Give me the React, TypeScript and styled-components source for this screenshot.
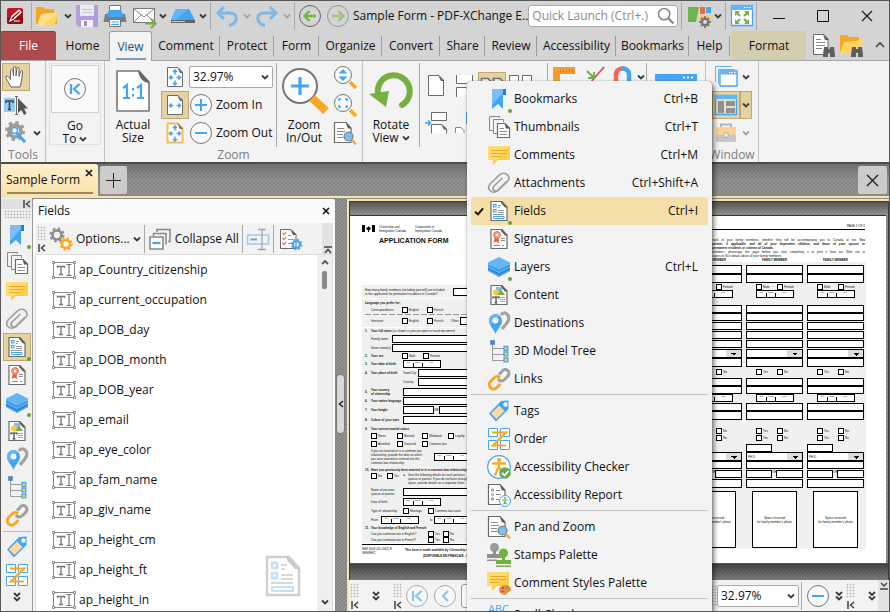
import React from "react";
import styled, { createGlobalStyle, css } from "styled-components";

const Global = createGlobalStyle`
  * { box-sizing: border-box; }
  html, body { margin: 0; height: 100%; }
  #root { height: 100%; }
  body { font: 12px/16px "Open Sans", "Noto Sans", sans-serif; color: #111; overflow: hidden; }
  button, input, select { font: inherit; color: inherit; margin: 0; padding: 0; border: 0; background: none; border-radius: 0; }
  svg { display: block; flex: none; overflow: visible; }
`;

/* ------------------------------------------------------------------ icons */

type IconProps = { size?: number; children?: React.ReactNode };
const Svg = ({ size = 24, children }: IconProps) => (
  <svg width={size} height={size} viewBox="0 0 24 24" fill="none" aria-hidden="true">{children}</svg>
);

const BLUE = "#42a5f5";
const LIGHT = "#7cbcf7";
const GREY = "#6b6b6b";
const GREEN = "#76b043";
const ORANGE = "#f9a825";

const Chevron = ({ faded = false }: { faded?: boolean }) => (
  <svg width="8" height="6" viewBox="0 0 8 6" fill="none" aria-hidden="true">
    <path d="M1 1.500 4 4.500 7 1.500" stroke={faded ? "#a3a3a3" : "#3c3c3c"} strokeWidth="1.800" />
  </svg>
);
const DoubleChevron = () => (
  <svg width="8" height="10" viewBox="0 0 8 10" fill="none" aria-hidden="true">
    <path d="M1 1 4 4 7 1M1 5.500 4 8.500 7 5.500" stroke="#3c3c3c" strokeWidth="1.800" />
  </svg>
);
const DockMark = () => (
  <svg width="8" height="8" viewBox="0 0 8 8" fill="none" aria-hidden="true">
    <path d="M1 0V8M7 1 3.500 4 7 7" stroke="#444" strokeWidth="1.500" />
  </svg>
);
const Cross = ({ size = 8, weight = 1.7 }: { size?: number; weight?: number }) => (
  <svg width={size} height={size} viewBox={`0 0 ${size} ${size}`} aria-hidden="true">
    <path d={`M1 1 ${size - 1} ${size - 1}M${size - 1} 1 1 ${size - 1}`} stroke="#1b1b1b" strokeWidth={weight} />
  </svg>
);

const Sheet = () => (
  <>
    <path d="M4 2.500H15L20 8V21.500H4Z" fill="#fff" stroke={GREY} strokeWidth="1.200" />
    <path d="M14 2 20.500 8.500H18L14 4Z" fill="#5a5a5a" />
  </>
);
const BookmarkIcon = () => (
  <Svg>
    <path d="M5 2H19V8H16V22L11 17 5 22Z" fill={BLUE} />
    <path d="M5 2H16V6L5 18Z" fill={LIGHT} />
    <path d="M16 2H19V8H16Z" fill="#1e83d8" />
  </Svg>
);
const ThumbsIcon = () => (
  <Svg>
    <path d="M12.500 3V1.500H2.500V15.500H6" stroke="#8a8a8a" />
    <path d="M16.500 7V4.500H6.500V18.500H10" stroke="#8a8a8a" fill="#f5f5f5" />
    <path d="M10.500 8.500H18L22.500 13V22.500H10.500Z" fill="#fff" stroke={GREY} strokeWidth="1.200" />
    <path d="M17.500 8 23 13.500H19Z" fill="#5a5a5a" />
    <path d="M12.500 13.500H17M12.500 16.500H20M12.500 19.500H20" stroke="#8a8a8a" />
  </Svg>
);
const Bubble = () => (
  <>
    <path d="M1 3H23V17H11L6 22V17H1Z" fill="#ffcf4a" />
    <path d="M1 3H23L9 17H1Z" fill="#ffdc73" />
    <path d="M4 7.500H20M4 10.500H20M4 13.500H14" stroke="#f5a623" />
  </>
);
const CommentIcon = () => <Svg><Bubble /></Svg>;
const ClipIcon = () => (
  <Svg>
    <path d="M20 10 10.500 19.500C5.500 24-1.500 18 3.500 12.500L12.500 3.800C17-.5 25.500 5 20.500 10.500L11 19.500C8 21.500 4.500 18.500 7 15L15.500 7" stroke="#a0a0a0" strokeWidth="1.700" />
  </Svg>
);
const FieldsIcon = ({ size = 24 }: { size?: number }) => (
  <Svg size={size}>
    <Sheet />
    <path d="M6.500 5.500H9V8H6.500ZM6.500 10.500H9V13H6.500Z" stroke={BLUE} strokeWidth="1.200" />
    <path d="M11 6.500H14M11 8.500H13M11 11.500H17M11 13.500H17M6 15.500H17" stroke="#8a8a8a" strokeWidth=".9" />
    <path d="M6.500 17.500H17V19.500H6.500Z" stroke={BLUE} />
  </Svg>
);
const SignIcon = () => (
  <Svg>
    <Sheet />
    <path d="M8 10 6.500 16 9.500 14.500 12 16 11.500 10Z" fill="#ef5b3a" />
    <circle cx="10" cy="8" r="3.400" fill="#f7a08a" stroke="#ef6a4a" />
    <circle cx="10" cy="8" r="1.200" fill="#fff" />
    <path d="M14 11.500H18M14 13.500H18M7 18.500H13M15 18.500H17" stroke="#8a8a8a" />
  </Svg>
);
const LayersIcon = () => (
  <Svg>
    <path d="M1 12 12 17 23 12V16L12 22 1 16Z" fill="#2b87d8" />
    <path d="M1 9 12 14 23 9V12L12 18 1 12Z" fill="#3b9cf0" />
    <path d="M1 15.500 12 21 23 15.500M1 12 12 17.500 23 12" stroke="#8cc5f5" strokeWidth=".7" />
    <path d="M12 2 23 7.500V9L12 14.500 1 9V7.500Z" fill="#64b5f6" />
  </Svg>
);
const ContentIcon = () => (
  <Svg>
    <Sheet />
    <path d="M9 4H15V9H9Z" fill={LIGHT} />
    <circle cx="9" cy="9.500" r="3" fill="#fdc832" />
    <path d="M10.500 12 14 6.500 18 12Z" fill={GREEN} />
    <path d="M6 15.500V14H12V15.500M9 14V19.500M7.500 20H10.500" stroke="#333" strokeWidth="1.200" />
    <path d="M13 14.500H18M13 16.500H18M13 18.500H18" stroke="#999" strokeWidth=".9" />
  </Svg>
);
const PinIcon = () => (
  <Svg>
    <path d="M14 4C17-.5 23 3 21.500 9 20.500 12.500 17 15 15 18" stroke="#a3a3a3" strokeWidth="3.200" />
    <path d="M8.500 23C7 18 2 15 2 9.500a6.500 6.500 0 0 1 13 0C15 15 10 18 8.500 23Z" fill={BLUE} />
    <path d="M2 9.500a6.500 6.500 0 0 1 11-4.500L4 14.500Q2 12 2 9.500Z" fill="#64b5f6" />
    <circle cx="8.500" cy="9.500" r="3" fill="#f5f5f5" />
  </Svg>
);
const TreeIcon = () => (
  <Svg>
    <path d="M5.500 4V21.500M5.500 9.500H17M5.500 15.500H17M5.500 21.500H17" stroke="#9b9b9b" />
    <path d="M3.500 1.500H7.500V5.500H3.500Z" fill="#f4511e" stroke={BLUE} />
    <path d="M17 7.500H20.800V11.300H17ZM17 13H20.800V16.800H17ZM17 19H20.800V22.800H17Z" fill="#ffd54f" stroke={BLUE} strokeWidth="1.300" />
  </Svg>
);
const LinkIcon = () => (
  <Svg>
    <path d="M12 7.500 15 4.500C18-.5 25 5 20.500 9.500L17.500 12.500C15 15 12.500 14 11 12" stroke="#a0a0a0" strokeWidth="3" />
    <path d="M13 10.500C10 8.500 8 10 6.500 11.500L3.500 14.500C-.5 20 6.500 25 10.500 20L13.500 17" stroke={ORANGE} strokeWidth="3" />
  </Svg>
);
const TagIcon = () => (
  <Svg>
    <path d="M14 2 21.500 1.500V10L9 22.500 2 14.500Z" fill={BLUE} />
    <path d="M12 6.500 17.500 12 9.500 20 4 14.500Z" fill="#ffd9a0" />
    <circle cx="18.500" cy="5.500" r="2.200" fill="#fff" />
  </Svg>
);
const OrderIcon = () => (
  <Svg>
    <path d="M1.500 1.500H10.500V9.500H1.500ZM13.500 1.500H22.500V9.500H13.500ZM1.500 13.500H10.500V22.500H1.500ZM13.500 13.500H22.500V22.500H13.500Z" fill="#fff" stroke={BLUE} />
    <path d="M5 5.500H19L6 18.500H19" stroke={ORANGE} strokeWidth="2.200" />
  </Svg>
);
const CheckerIcon = () => (
  <Svg>
    <circle cx="12" cy="12" r="11.300" fill="#fff" stroke={BLUE} strokeWidth="1.200" />
    <circle cx="12" cy="5" r="2.200" fill={ORANGE} />
    <path d="M5 8.500H19M12 8V14M11 13 8 20.500M13 13 14.500 17" stroke={ORANGE} strokeWidth="2.400" />
    <circle cx="18" cy="18" r="5.800" fill="#6aa84f" />
    <path d="M15 18 17.500 20.500 21.500 16" stroke="#fff" strokeWidth="1.800" />
  </Svg>
);
const ReportIcon = () => (
  <Svg>
    <path d="M1.500 1.500H13L18 7V21.500H1.500Z" fill="#fff" stroke={GREY} strokeWidth="1.200" />
    <path d="M12.500 1 18.500 7.500H15Z" fill="#5a5a5a" />
    <path d="M4.500 6H6.500V8H4.500Z" stroke={BLUE} /><path d="M4.500 10.500H6.500V12.500H4.500Z" stroke={ORANGE} /><path d="M4.500 15H6.500V17H4.500Z" stroke={GREEN} />
    <path d="M9 7.500H13M9 11.500H14M9 16.500H12" stroke="#8a8a8a" />
    <circle cx="18" cy="18" r="5.500" fill="#fff" stroke={BLUE} />
    <circle cx="18" cy="15" r="1" fill={GREEN} />
    <path d="M15 17H21M18 17V19L16.500 21.500M18 19 19.500 21.500" stroke={GREEN} strokeWidth="1.200" />
  </Svg>
);
const PanIcon = () => (
  <Svg>
    <path d="M1.500 1.500H13L18 7V21.500H1.500Z" fill="#fff" stroke={GREY} strokeWidth="1.200" />
    <path d="M12.500 1 18.500 7.500H15Z" fill="#5a5a5a" />
    <path d="M4 7.500H11M4 10.500H12M4 13.500H10M4 16.500H10" stroke="#8a8a8a" />
    <circle cx="15.500" cy="15.500" r="4.500" fill={LIGHT} stroke="#7d7d7d" strokeWidth="1.200" />
    <path d="M19 19 23 23.500" stroke={ORANGE} strokeWidth="2.200" />
  </Svg>
);
const StampIcon = () => (
  <Svg>
    <circle cx="7.500" cy="4.500" r="4.500" fill="#9a9a9a" /><path d="M6 7H9V11H15V15H0V11H6Z" fill="#8f8f8f" /><path d="M0 16.500H10V18H0Z" fill="#8f8f8f" />
    <circle cx="16.500" cy="10" r="4.600" fill={GREEN} /><path d="M15 13H18V17H24V21H9V17H15Z" fill={GREEN} /><path d="M9 22.500H24V24H9Z" fill={GREEN} />
  </Svg>
);
const StylesIcon = () => (
  <Svg>
    <g transform="translate(-1 -2)"><Bubble /></g>
    <path d="M12 19C12 13 23 12 24 18 24.500 21 21 20 20.500 22 20 25 12 24 12 19Z" fill="#ee8f2f" />
    <circle cx="16" cy="17" r="1.100" fill="#d63a2f" /><circle cx="20" cy="17" r="1.100" fill={BLUE} /><circle cx="15.500" cy="20.500" r="1.100" fill="#7b52c0" />
  </Svg>
);
const SpellIcon = () => (
  <Svg>
    <text x="1" y="10" fontSize="11" fill={BLUE}>ABC</text>
    <path d="M4 17 10 22 20 13" stroke={GREEN} strokeWidth="3" />
  </Svg>
);
const FieldGlyph = () => (
  <svg width="24" height="18" viewBox="0 0 24 18" fill="none" aria-hidden="true">
    <path d="M1.500 1.500H22.500V16.500H1.500Z" stroke="#888" />
    <path d="M.5 .5H2.500V2.500H.5ZM21.500 .5H23.500V2.500H21.500ZM.5 15.500H2.500V17.500H.5ZM21.500 15.500H23.500V17.500H21.500Z" fill="#fff" stroke="#888" />
    <path d="M5.500 7V5.500H12.500V7M9 5V13M7 13.500H11" stroke="#777" strokeWidth="1.300" />
    <path d="M14.500 3.500H19.500M17 3.500V14.500M14.500 14.500H19.500" stroke="#777" strokeWidth="1.200" />
  </svg>
);

const FolderIcon = () => (
  <Svg>
    <path d="M1 3H8L10 5H19V9H22V20H1Z" fill="#f5a623" />
    <path d="M6 10 24 8.500 19 22 2 22Z" fill="#ffd560" /><path d="M6 10 24 8.500 7 22H2Z" fill="#ffe08a" />
  </Svg>
);
const LogoIcon = () => (
  <svg width="16" height="16" viewBox="0 0 16 16" fill="none" aria-hidden="true">
    <rect width="16" height="16" rx="2" fill="#c4161c" /><path d="M0 10 16 4V14a2 2 0 0 1-2 2H2a2 2 0 0 1-2-2Z" fill="#8e0f14" />
    <path d="M3 13 5 8 12 2 14 4 7 11ZM7 13H13" stroke="#fff" strokeWidth="1.200" /><path d="M5 9 12 3M7 10 14 5" stroke="#fff" />
  </svg>
);
const SaveIcon = () => (
  <Svg>
    <path d="M1 1H23V23H4L1 20Z" fill="#b39ddb" /><path d="M5 1H19V12H5Z" fill="#ece8f4" /><path d="M7 5.500H17M7 8.500H17" stroke="#c9c9c9" />
    <path d="M6 16H18V23H6Z" fill="#f4f4f8" /><path d="M9 17H12V22H9Z" fill="#a18bd0" />
  </Svg>
);
const PrinterIcon = () => (
  <Svg>
    <path d="M6.500 1.500H17.500V10H6.500Z" fill="#fff" stroke="#777" /><path d="M2 10H22L23.500 18H.5Z" fill="#7c7c7c" />
    <path d="M4 10 6 6H18L20 10V13H4Z" fill={BLUE} /><path d="M6.500 15.500H17.500V22.500H6.500Z" fill="#fff" stroke="#777" /><path d="M8 18H16M8 20.500H16" stroke={BLUE} />
  </Svg>
);
const MailIcon = () => (
  <Svg>
    <path d="M1.500 4.500H22.500V18.500H1.500Z" fill="#fff" stroke="#777" /><path d="M2 5 12 13 22 5M2 18 9 11M22 18 15 11" stroke="#888" />
    <path d="M13 19.500H23M19 15 23.500 19.500 19 24" stroke={GREEN} strokeWidth="2.200" />
  </Svg>
);
const ScanIcon = () => (
  <Svg>
    <path d="M5 5H18L24 16H0Z" fill={BLUE} /><path d="M5 5H17L5 16H0Z" fill="#64b5f6" /><path d="M0 16H24V19H0Z" fill="#666" /><path d="M1 17.500H14" stroke="#ccc" />
  </Svg>
);
const UndoIcon = ({ flip = false }: { flip?: boolean }) => (
  <Svg><g transform={flip ? "matrix(-1 0 0 1 24 0)" : undefined}><path d="M9 3 3 9 9 15M3 9H15C20 9 22 12 21 16 20 19 17 21 14 21" stroke="#7db8e8" strokeWidth="3" /></g></Svg>
);
const ArrowCircle = ({ faded = false }: { faded?: boolean }) => (
  <Svg><g opacity={faded ? 0.55 : 1}><circle cx="12" cy="12" r="10.500" stroke="#666" /><g transform={faded ? "matrix(-1 0 0 1 24 0)" : undefined}><path d="M11.500 7 6.500 12 11.500 17M6.500 12H18" stroke={GREEN} strokeWidth="2.300" /></g></g></Svg>
);
const SkinIcon = () => (
  <Svg>
    <path d="M1 3H12L9 18H1Z" fill="#6fb34c" /><path d="M13 3H18V10H13Z" fill="#f4693c" /><path d="M19 3H24V9H19Z" fill={BLUE} /><path d="M12 11H24V16H12Z" fill="#ffcc66" />
    <path d="M18 12V24M12 18H24M14 14 22 22M22 14 14 22" stroke="#777" strokeWidth="1.800" /><circle cx="18" cy="18" r="3.200" stroke="#777" strokeWidth="2.400" fill="#ddd" />
  </Svg>
);
const FullIcon = () => (
  <Svg>
    <path d="M1.500 1.500H22.500V21.500H1.500Z" fill="#fff" stroke={BLUE} strokeWidth="1.300" /><path d="M1 1H23V6H1Z" fill="#64b5f6" /><path d="M14 3.500H21" stroke="#fff" strokeDasharray="1.500 1" />
    <path d="M5 7H10L5 12ZM19 7V12L14 7ZM5 20V15L10 20ZM19 20H14L19 15Z" fill={GREEN} /><path d="M7 9 10 12M17 9 14 12M7 18 10 15M17 18 14 15" stroke={GREEN} strokeWidth="2.200" />
  </Svg>
);
const Binoculars = () => <path d="M13 14H17V16H19V14H23L24 22V24H19V20H17V24H12V22Z" fill="#5f5f5f" />;
const FindDocIcon = () => (
  <Svg><path d="M2.500 1.500H13L17 6V21.500H2.500Z" fill="#fff" stroke={GREY} /><path d="M12 1 18 7H14Z" fill="#5a5a5a" /><path d="M5 6.500H10M5 9.500H14M5 12.500H14M5 15.500H11" stroke="#888" /><Binoculars /></Svg>
);
const FindFolderIcon = () => (
  <Svg><path d="M1 2H8L10 4H20V8H22V19H1Z" fill="#f5a623" /><path d="M5 9 24 7 20 20H1Z" fill="#ffd560" /><Binoculars /></Svg>
);
const HandIcon = () => (
  <Svg>
    <path d="M7 22 3 15 1.500 12C2 10.500 3.500 11 5 12.500L6.500 14.500V5.500C6.500 4 8.500 4 8.700 5.500L9.500 11V3C9.500 1.300 12 1.300 12 3V11L12.800 3.500C13 2 15 2 15 3.500V11.500L16.500 6.500C17 5 18.800 5.500 18.500 7L17.500 16 16 22Z" fill="#fff" stroke="#666" />
  </Svg>
);
const SelectIcon = () => (
  <Svg>
    <path d="M0 5H11V19H0Z" fill="#90caf9" /><path d="M2 10V8H9V10M5.500 8V16M4 16.500H7" stroke="#444" strokeWidth="1.600" /><path d="M11 3.500H14M12.500 3V21M11 21.500H14" stroke="#666" />
    <path d="M14 5 24 15.500H20L22.500 20.500 20 22 17.500 17 14 20Z" fill="#555" />
  </Svg>
);
const Cog = ({ cx, cy, r, color }: { cx: number; cy: number; r: number; color: string }) => (
  <>
    <circle cx={cx} cy={cy} r={r} stroke={color} strokeWidth={r * 0.6} />
    <circle cx={cx} cy={cy} r={r * 1.45} stroke={color} strokeWidth={r * 0.45} strokeDasharray={`${r * 0.57} ${r * 0.57}`} />
  </>
);
const ToolsIcon = () => (
  <Svg><Cog cx={11} cy={10} r={6} color="#9a9a9a" /><path d="M11 10 21 21" stroke={BLUE} strokeWidth="3" /><circle cx="10.500" cy="9.500" r="3" fill="#fff" stroke={BLUE} strokeWidth="1.500" /></Svg>
);
const CogsIcon = () => <Svg><Cog cx={8} cy={8} r={4.5} color="#8d8d8d" /><Cog cx={17} cy={17} r={4} color={ORANGE} /></Svg>;
const FirstCircle = ({ only = false, faded = false }: { only?: boolean; faded?: boolean }) => (
  <Svg><circle cx="12" cy="12" r="10.500" fill="#f8f8f8" stroke={faded ? "#aaa" : "#777"} /><path d={only ? "M15 7 10 12 15 17" : "M8 7V17M16.500 7 11 12 16.500 17"} stroke={faded ? "#8cc5f5" : BLUE} strokeWidth="2.200" /></Svg>
);
const ZoomCircle = ({ plus = false }: { plus?: boolean }) => (
  <Svg><circle cx="12" cy="12" r="10.500" fill="#fafafa" stroke="#777" /><path d={plus ? "M6 12H18M12 6V18" : "M6 12H18"} stroke={BLUE} strokeWidth="2" /></Svg>
);
const FitIcon = ({ kind }: { kind: "page" | "width" | "visible" }) => (
  <Svg>
    <path d="M4.500 2.500H15L19.500 7V21.500H4.500Z" fill="#fff" stroke={kind === "visible" ? "#fbb95a" : GREY} strokeWidth={kind === "visible" ? 2 : 1} />
    <path d="M14 2 20 8H17Z" fill="#666" />
    {kind !== "width" && <path d="M12 5V9.500M10 7 12 5 14 7M12 20V15.500M10 18 12 20 14 18" stroke={BLUE} strokeWidth="1.500" />}
    <path d="M6.500 12.500H10.500M8.500 10.500 6.500 12.500 8.500 14.500M17.500 12.500H13.500M15.500 10.500 17.500 12.500 15.500 14.500" stroke={BLUE} strokeWidth="1.500" />
  </Svg>
);
const ActualIcon = () => (
  <svg width="36" height="44" viewBox="0 0 36 44" fill="none" aria-hidden="true">
    <path d="M2 2H24L34 13V42H2Z" fill="#fff" stroke="#777" strokeWidth="1.600" strokeLinejoin="round" /><path d="M23 1 35 14C29 14 24 10 23 1Z" fill="#666" />
    <path d="M8 19 12 16V29M8 29H15M22 19 26 16V29M22 29H29" stroke={BLUE} strokeWidth="2.200" /><path d="M18 19V21.500M18 25V27.500" stroke={BLUE} strokeWidth="2" />
  </svg>
);
const MagnifierBig = () => (
  <svg width="48" height="48" viewBox="0 0 48 48" fill="none" aria-hidden="true">
    <circle cx="20" cy="19" r="17" fill="#fbfbfb" stroke="#777" strokeWidth="2" /><path d="M11 19H29M20 10V28" stroke={BLUE} strokeWidth="3.200" />
    <path d="M32 31 46 44" stroke={ORANGE} strokeWidth="8" />
  </svg>
);
const LensIcon = ({ kind }: { kind: "updown" | "frame" }) => (
  <Svg>
    <circle cx="10" cy="10" r="8.500" fill="#fbfbfb" stroke="#777" /><path d="M17 17 23 23" stroke={ORANGE} strokeWidth="3.500" />
    {kind === "updown" ? <path d="M5.500 8.500 10 4 14.500 8.500ZM5.500 11.500 10 16 14.500 11.500Z" fill={BLUE} /> : <path d="M6 8V6H8M12 6H14V8M14 12V14H12M8 14H6V12" stroke={BLUE} strokeWidth="1.600" />}
  </Svg>
);
const RotateIcon = () => (
  <svg width="44" height="42" viewBox="0 0 44 42" fill="none" aria-hidden="true">
    <path d="M9 24A16 16 0 1 1 33 35" stroke={GREEN} strokeWidth="6" strokeLinecap="round" /><path d="M0 24 20 21 17 37Z" fill={GREEN} />
  </svg>
);
const PageIcon = () => <Svg><path d="M4.500 1.500H15L19.500 6V21.500H4.500Z" fill="#fff" stroke={GREY} /><path d="M14 1 20 7H17Z" fill="#555" /></Svg>;
const ContinuousIcon = () => <Svg><path d="M4.500 1V9.500H20.500V1M4.500 23V13.500H14L20.500 19" fill="#fff" stroke={GREY} /></Svg>;
const FacingIcon = () => <Svg><path d="M1.500 20V4.500H8L10.500 7V20M13.500 20V4.500H20L22.500 7V20" fill="#fff" stroke={GREY} strokeWidth="1.600" /></Svg>;
const TwoUpIcon = () => <Svg><path d="M1.500 1.500H10.500V16.500H1.500ZM14.500 1.500H23.500V16.500H14.500Z" fill="#fff" stroke={GREY} /></Svg>;
const SplitIcon = () => <Svg><path d="M7.500 1.500H22.500V9.500H7.500ZM7.500 22.500V13.500H18L22.500 18V22.500" fill="#fff" stroke={GREY} /><path d="M17 13 23 18.500H20Z" fill="#555" /><path d="M1 12H6M4 9.500 6.500 12 4 14.500" stroke={BLUE} strokeWidth="1.600" /></Svg>;
const SplitTwoIcon = () => <Svg><path d="M3.500 22V16.500H9L12 19.500V22" fill="#fff" stroke="#888" /><path d="M14.500 1.500H23V13H14.500Z" fill="#fff" stroke={BLUE} /></Svg>;
const RulerIcon = () => <Svg><path d="M1 2H23V9H8V24H1Z" fill="#f79b2e" /><path d="M8 6H22" stroke="#c77a28" strokeDasharray="1 2" strokeWidth="3" /></Svg>;
const GuidesIcon = () => <Svg><path d="M9 17 22 2" stroke="#d9444a" strokeWidth="1.600" /><path d="M5 6 12 13M6 13H12V7" stroke={GREEN} strokeWidth="2" /></Svg>;
const MagnetIcon = () => <Svg><path d="M6 22V9A6 6 0 0 1 13 3.500" stroke="#f46a4e" strokeWidth="4.500" /><path d="M12 3.500A6 6 0 0 1 19 9V22" stroke={BLUE} strokeWidth="4.500" /></Svg>;
const WindowBig = () => (
  <svg width="44" height="36" viewBox="0 0 44 36" fill="none" aria-hidden="true"><path d="M2 2H42V34H2Z" fill="#fff" stroke={BLUE} strokeWidth="2" /><path d="M1 1H43V8H1Z" fill={BLUE} /><path d="M29 4.500H40" stroke="#fff" strokeWidth="2" strokeDasharray="2 2" /><path d="M22 8V34" stroke="#333" strokeWidth="1.500" /></svg>
);
const WindowsIcon = () => <Svg><path d="M1.500 17V1.500H18M4.500 19V4.500H21" stroke="#64b5f6" /><path d="M6 6H23V21H6Z" fill="#fff" stroke={BLUE} strokeWidth="1.300" /><path d="M6 6H23V9.500H6Z" fill="#64b5f6" /><path d="M15 7.500H22" stroke="#fff" strokeDasharray="1.500 1" /></Svg>;
const PanesIcon = () => <Svg><path d="M1.500 2.500H22.500V21.500H1.500Z" fill="#e8dfc8" stroke={BLUE} strokeWidth="1.300" /><path d="M1 2H23V6H1Z" fill="#64b5f6" /><path d="M4 8H10V20H4ZM12 8H21V13H12ZM12 15H21V20H12Z" fill="#8f8f8f" /></Svg>;
const CaseIcon = () => <Svg><path d="M7 6V3.500H17V6" stroke="#b5b5b5" strokeWidth="2" /><path d="M2 6H22V14H2Z" fill="#fbd293" /><path d="M2 14H22V21H2Z" fill="#c6c6c6" /><circle cx="12" cy="14" r="2.500" fill="#ededed" stroke="#aaa" /></Svg>;
const CollapseIcon = () => <Svg><path d="M9 5V2.500H22V14.500H20M5.500 9V6.500H18V17.500" stroke="#888" strokeWidth="1.500" /><path d="M2 10H15V22H2Z" fill="#fff" stroke="#888" strokeWidth="1.500" /><path d="M4.500 16H12.500" stroke={BLUE} strokeWidth="2.200" /></Svg>;
const RenameIcon = () => <Svg><path d="M1.500 8H22.500V17H1.500Z" stroke="#9bcdf7" strokeWidth="1.700" /><path d="M4.500 12.500H11" stroke="#999" strokeWidth="2" /><path d="M12 2.500H20M16 2.500V22.500M12 22.500H20" stroke="#a5a5a5" strokeWidth="1.300" /></Svg>;
const ListCogIcon = () => <Svg><path d="M1.500 2.500H12L17 7.500V21.500H1.500Z" fill="#fff" stroke={GREY} /><path d="M11.500 2 17.500 8H14Z" fill="#555" /><path d="M3.500 6 5 7.500 7 5M3.500 11 5 12.500 7 10M3.500 16 5 17.500 7 15" stroke="#ef6a4a" strokeWidth="1.200" /><path d="M9 8.500H12M9 12.500H14M9 16.500H12" stroke="#999" /><Cog cx={17.5} cy={17.5} r={3.5} color={BLUE} /></Svg>;

/* ----------------------------------------------------------------- chrome */

const Shell = styled.div`
  position: relative; display: flex; flex-direction: column; height: 100%;
  border: 1px solid #575757; overflow: hidden; background: #d4d4d4;
`;
const TitleBar = styled.header`
  display: flex; align-items: center; height: 30px; flex: none; padding-left: 6px;
`;
const IconButton = styled.button<{ $w?: number; $on?: boolean }>`
  display: flex; align-items: center; justify-content: center; flex: none;
  width: ${(p) => p.$w ?? 28}px; height: 28px; position: relative;
  ${(p) => p.$on && css`background: #e6d2a0; box-shadow: inset 0 0 0 1px #bda877;`}
`;
const Rule = styled.span<{ $gap?: number; $h?: number }>`
  width: 1px; height: ${(p) => p.$h ?? 28}px; flex: none; background: #a9a9a9; margin: 0 ${(p) => p.$gap ?? 3}px;
`;
const LogoSlot = styled.div`width: 24px;`;
const AppTitle = styled.h1`
  flex: none; margin: 0 0 0 1px; font-size: 12px; font-weight: 400; white-space: nowrap;
`;
const Search = styled.label`
  display: flex; align-items: center; flex: 1; min-width: 0; height: 22px; padding: 0 2px 0 3px; background: #fff; border: 1px solid #a8a8a8; border-radius: 3px;
  input { flex: 1; min-width: 0; outline: 0; }
  input::placeholder { color: #8b8b8b; opacity: 1; }
`;
const WindowButton = styled(IconButton)`width: 44px;`;

const TabBar = styled.nav`
  display: flex; align-items: stretch; height: 30px; flex: none; border-bottom: 1px solid #a6a6a6;
`;
const Tab = styled.button<{ $w: number; $rule?: boolean; $kind?: "file" | "active" | "format" }>`
  flex: none; width: ${(p) => p.$w}px; height: 29px; position: relative; white-space: nowrap;
  ${(p) => p.$rule && css`
    background: linear-gradient(#9c9c9c, #9c9c9c) right center / 1px 20px no-repeat;
  `}
  ${(p) => p.$kind === "file" && css`background: #ad4a4c; color: #fff; border-radius: 2px 3px 0 0; box-shadow: inset 0 1px #8c3b3d;`}
  ${(p) => p.$kind === "active" && css`
    height: 30px; color: #2b5278; border: 1px solid #a0a0a0; border-bottom: 0; border-radius: 3px 3px 0 0;
    background: linear-gradient(#7e9ebb, #7e9ebb) center 26px / 30px 2px no-repeat, #f3f3f3;
  `}
  ${(p) => p.$kind === "format" && css`background: #d2ceb0; border: 1px solid #d8cc9b; border-bottom: 0;`}
`;
const Spacer = styled.span`flex: 1;`;

/* ----------------------------------------------------------------- ribbon */

const Ribbon = styled.section`
  display: flex; height: 103px; flex: none; background: #f3f3f3; border-bottom: 2px solid #4d4d4d;
`;
const Group = styled.div<{ $w: number }>`
  display: flex; flex-direction: column; flex: none; width: ${(p) => p.$w}px; border-right: 1px solid #c2c2c2;
`;
const GroupBody = styled.div`display: flex; flex: 1; padding-top: 2px; min-height: 0;`;
const GroupName = styled.span`height: 15px; line-height: 16px; flex: none; text-align: center; color: #7d7d7d;`;
const Stack = styled.div<{ $w?: number; $pad?: number }>`
  display: flex; flex-direction: column; flex: none; ${(p) => p.$w && `width: ${p.$w}px;`} padding-left: ${(p) => p.$pad ?? 0}px;
`;
const Line = styled.div`display: flex; align-items: center; height: 28px; flex: none;`;
const BigButton = styled.button<{ $w: number; $framed?: boolean }>`
  display: flex; flex-direction: column; align-items: center; flex: none; width: ${(p) => p.$w}px; height: 84px; line-height: 13px;
  ${(p) => p.$framed && css`margin: 2px 3px; width: ${p.$w - 6}px; height: 82px; border: 1px solid #e2e2e2;`}
`;
const BigArt = styled.span<{ $framed?: boolean }>`
  display: flex; align-items: center; justify-content: center; height: 55px; width: 48px; flex: none;
  ${(p) => p.$framed && css`height: 48px; margin: 1px 0 6px; border: 1px solid #cfcfcf; background: #fafafa;`}
`;
const Caption = styled.span`display: flex; align-items: center; gap: 3px; height: 13px;`;
const TextButton = styled.button`display: flex; align-items: center; gap: 3px; height: 28px; flex: none; white-space: nowrap;`;
const Combo = styled.label<{ $w: number }>`
  position: relative; display: flex; align-items: center; width: ${(p) => p.$w}px; height: 22px; flex: none;
  background: #fff; border: 1px solid #a8a8a8; border-radius: 2px;
  select { appearance: none; width: 100%; height: 20px; padding-left: 3px; outline: 0; }
  svg { position: absolute; right: 3px; pointer-events: none; }
`;
const Hollow = styled.div`display: flex; padding: 9px 0 0 2px; height: 37px; flex: none;`;

/* --------------------------------------------------------------- document */

const weave = "repeating-conic-gradient(#878787 0 25%, #909090 0 50%) 0 0 / 4px 4px";
const DocTabs = styled.div`
  display: flex; align-items: center; height: 34px; flex: none; border-bottom: 2px solid #f8e2ae;
  background: linear-gradient(#0003, #0000 16px), ${weave};
`;
const DocTab = styled.button`
  display: flex; align-items: flex-start; justify-content: space-between; width: 97px; height: 32px; padding: 8px 5px 0;
  background: linear-gradient(#98875c, #98875c) center 28px / 86px 2px no-repeat, linear-gradient(#fff0cc, #f9e1ac); border-radius: 0 3px 0 0; white-space: nowrap;
  svg { margin-top: -3px; }
`;
const SquareButton = styled.button<{ $w: number }>`
  display: flex; align-items: center; justify-content: center; width: ${(p) => p.$w}px; height: 28px; margin: 0 2px; background: #cbcbcb; border-radius: 2px;
`;
const Main = styled.main`display: flex; flex: 1; min-height: 0; background: ${weave};`;
const Rail = styled.aside`
  display: flex; flex-direction: column; align-items: center; width: 31px; flex: none; background: #f1f1f1; padding-top: 1px;
`;
const RailTop = styled.div`width: 100%; height: 10px; display: flex; justify-content: flex-end; padding: 1px 1px 0 0; background: #e0e0e0;`;
const Dots = styled.span<{ $w: number; $h: number }>`
  width: ${(p) => p.$w}px; height: ${(p) => p.$h}px; flex: none;
  background: radial-gradient(circle, #b0b0b0 40%, transparent 50%) 0 0 / 3px 3px;
`;
const RailRule = styled.span`width: 28px; height: 1px; margin: 2px 0 1px; background: #b9b9b9; flex: none;`;
const Dot = styled.i`position: absolute; right: 0; bottom: 0; width: 4px; height: 4px; border-radius: 2px; background: #66a030;`;

const Panel = styled.section`
  display: flex; flex-direction: column; width: 303px; flex: none; margin-top: 1px; background: #fafafa; border-left: 1px solid #999; border-radius: 2px 2px 0 0;
`;
const PanelHead = styled.div`
  display: flex; align-items: center; justify-content: space-between; height: 24px; flex: none; padding: 0 5px;
  h2 { margin: 0; font-size: 12px; font-weight: 400; }
`;
const PanelBar = styled.div`
  display: flex; align-items: center; height: 31px; flex: none; margin: 0 2px; background: #f2f2f2; padding-left: 2px;
`;
const Grip = styled.div`display: flex; flex-direction: column; align-items: center; gap: 3px; flex: none;`;
const BarEnd = styled.div`display: flex; align-items: flex-end; justify-content: center; width: 11px; height: 31px; flex: none; background: #e2e2e2;`;
const PanelBody = styled.div`display: flex; flex: 1; min-height: 0; margin: 0 2px; border: 1px solid #ddd; border-bottom: 0; position: relative;`;
const FieldList = styled.ul`flex: 1; margin: 0; padding: 0; list-style: none; background: #fff; overflow: hidden;`;
const FieldRow = styled.li`display: flex; align-items: center; gap: 3px; height: 30px; padding-left: 16px;`;
const ScrollTrack = styled.div`
  display: flex; flex-direction: column; align-items: center; justify-content: space-between; width: 15px; padding: 4px 0 6px; background: #efefef;
`;
const ScrollThumb = styled.span`width: 5px; height: 18px; margin: 6px 0 auto; background: #8b8b8b; border-radius: 2px;`;
const Ghost = styled.div`position: absolute; right: 25px; bottom: 11px; opacity: .32;`;
const Splitter = styled.div`display: flex; flex-direction: column; width: 12px; flex: none; padding-top: 176px;`;
const SplitHandle = styled.button`
  display: flex; align-items: center; justify-content: center; width: 9px; height: 60px; margin-left: 1px; background: #d9d9d9; border: 1px solid #777; border-radius: 4px;
`;
const Viewer = styled.section`
  display: flex; flex-direction: column; flex: 1; min-width: 0; margin-top: 1px; border-top: 2px solid #f8e2ae; border-left: 2px solid #f8e2ae;
`;
const Canvas = styled.div`
  display: flex; flex: 1; min-height: 0; align-items: flex-start; padding: 14px 2px 0 0; border: 1px solid #3c3c3c; border-bottom: 0;
  background: linear-gradient(#0006, #0000 12px), linear-gradient(#0000 calc(100% - 18px), #0008 calc(100% - 16px), #0002), ${weave};
`;
const StatusBar = styled.div`
  display: flex; align-items: center; height: 31px; flex: none; background: #f3f3f3; padding-left: 1px; overflow: hidden;
`;
const PageInput = styled.input`width: 60px; height: 24px; border: 1px solid #9d9d9d; border-radius: 3px; background: #fafafa; margin-left: 2px;`;

/* ------------------------------------------------------------- form pages */

const Paper = styled.article<{ $second?: boolean }>`
  flex: 1; min-width: 0; height: 348px; padding: ${(p) => (p.$second ? "8px 20px 0 12px" : "9px 12px 0")};
  background: #fff; font: 3px/4px "Liberation Sans", Arial, sans-serif; color: #111; overflow: hidden;
  border-top: 1px solid #333; margin-top: -1px;
`;
const PaperHead = styled.div`display: flex; height: 8px; gap: 4px; white-space: nowrap;`;
const PaperTitle = styled.h2`margin: 4px 0 39px 17px; height: 9px; font-size: 7px; line-height: 8px; white-space: nowrap;`;
const Shade = styled.div`background: #f0f0f0; margin-bottom: 1px;`;
const Row = styled.div<{ $h: number; $top?: boolean }>`
  display: flex; height: ${(p) => p.$h}px; align-items: ${(p) => (p.$top ? "flex-start" : "center")}; white-space: nowrap;
`;
const Cell = styled.span<{ $w: number; $bold?: boolean }>`
  flex: none; width: ${(p) => p.$w}px; font-weight: ${(p) => (p.$bold ? 700 : 400)};
`;
const Box = styled.input<{ $w?: number; $h?: number }>`
  ${(p) => (p.$w ? `flex: none; width: ${p.$w}px;` : "flex: 1; min-width: 0; width: 100%;")}
  height: ${(p) => p.$h ?? 8}px; border: 1px solid #000; background: #fff; outline: 0;
`;
const TickLabel = styled.label<{ $w: number }>`
  display: flex; align-items: center; gap: 1px; flex: none; width: ${(p) => p.$w}px;
  input { appearance: none; width: 6px; height: 6px; border: 1px solid #000; background: #fff; flex: none; }
`;
const CombBox = styled.div`
  display: grid; grid-template-columns: 1fr 1fr 2fr; width: 38px; height: 8px; flex: none; border: 1px solid #000; background: #fff; font-size: 2px; line-height: 2px; text-align: center;
  span + span { background: linear-gradient(#000, #000) left bottom / 1px 4px no-repeat; }
`;
const Dashed = styled.div`height: 1px; margin: 1px 3px 0; background: repeating-linear-gradient(90deg, #999 0 6px, transparent 6px 8px);`;
const Pad = styled.div<{ $l: number }>`flex: none; padding-left: ${(p) => p.$l}px;`;
const Foot = styled.div`
  border-top: 1px solid #000; display: flex; padding-top: 2px; white-space: nowrap;
  strong { text-align: center; line-height: 6px; }
`;
const PageNo = styled.div`height: 6px; text-align: right; border-bottom: 1px solid #000; margin-right: 1px;`;
const Intro = styled.p<{ $last?: boolean }>`
  margin: ${(p) => (p.$last ? "0" : "8px")} 1px 0 auto; width: 153px; white-space: nowrap;
  span { display: block; height: 4px; text-align-last: justify; }
  span:last-child { text-align-last: left; }
`;
const Members = styled.div`display: grid; grid-template-columns: 1fr 57px 57px 57px; column-gap: 4px; padding-right: 2px;`;
const MemberHead = styled(Members)`height: 4px; text-align: center; font-weight: 700;`;
const Column = styled.div`display: flex; flex-direction: column;`;
const Gap = styled.div<{ $h: number }>`height: ${(p) => p.$h}px; flex: none;`;
const Field = styled.div<{ $h: number; $w?: number }>`
  display: flex; height: ${(p) => p.$h}px; flex: none; ${(p) => p.$w && `width: ${p.$w}px;`}
`;
const Indent = styled.div<{ $h: number }>`display: flex; align-items: center; height: ${(p) => p.$h}px; padding-left: 10px;`;
const DropBox = styled.select`
  appearance: none; width: 100%; border: 1px solid #000; padding-left: 1px;
  background: linear-gradient(to bottom left, #000 50%, transparent 50%) 45px 3px / 3px 3px no-repeat, linear-gradient(to bottom right, #000 50%, transparent 50%) 48px 3px / 3px 3px no-repeat, linear-gradient(#ddd, #ddd) right / 15px 7px no-repeat, #fff;
`;
const Photo = styled.div`
  display: flex; align-items: center; justify-content: center; width: 45px; height: 57px; margin-left: 6px; border: 1px solid #000; background: #fff; text-align: center; white-space: nowrap;
`;

const Tick = ({ label, w = 21 }: { label: string; w?: number }) => (
  <TickLabel $w={w}><input type="checkbox" />{label}</TickLabel>
);
const Comb = () => <CombBox><span>Day</span><span>Month</span><span>Year</span></CombBox>;
type EntryProps = { n?: string; label: string; lead?: string; bold?: boolean; h: number };
const Entry = ({ n = "", label, lead, bold = true, h }: EntryProps) => (
  <Row $h={h}>
    <Pad $l={3} /><Cell $w={6} $bold>{n}</Cell><Cell $w={bold ? 32 : 21} $bold={bold}>{label}</Cell>
    {lead !== undefined && <Cell $w={15}>{lead}</Cell>}
    <Box aria-label={lead || label} />
  </Row>
);

const PageOne = () => (
  <Paper>
    <PaperHead>
      <svg width="13" height="8" viewBox="0 0 13 8" aria-hidden="true"><path d="M0 0H3V7H0ZM10 0H13V7H10ZM6.500 1 7.500 2.500 9 2.500 8 5H5L4 2.500H5.500ZM6 5H7V7H6Z" fill="#000" /></svg>
      <Cell $w={32}>Citizenship and<br />Immigration Canada</Cell>
      <Cell $w={32}>Citoyenneté et<br />Immigration Canada</Cell>
    </PaperHead>
    <PaperTitle>APPLICATION FORM</PaperTitle>
    <Shade>
      <Row $h={13}>
        <Pad $l={3} /><Cell $w={88}>How many family members (including yourself) are included<br />in this application for permanent residence in Canada?</Cell><Box $w={40} aria-label="Family members" />
      </Row>
    </Shade>
    <Shade>
      <Row $h={7}><Pad $l={3} /><Cell $w={60} $bold>Language you prefer for:</Cell></Row>
      <Row $h={7}><Pad $l={9} /><Cell $w={31}>Correspondence:</Cell><Tick label="English" w={25} /><Tick label="French" /></Row>
      <Dashed />
      <Row $h={12}><Pad $l={9} /><Cell $w={31}>Interview:</Cell><Tick label="English" w={25} /><Tick label="French" w={24} /><Cell $w={9}>Other:</Cell><Box aria-label="Other language" /></Row>
    </Shade>
    <Shade>
      <Row $h={6}><Pad $l={3} /><Cell $w={6} $bold>1.</Cell><span><b>Your full name</b> (as shown in your passport or travel document)</span></Row>
      <Entry label="Family name" bold={false} h={9} />
      <Entry label="Given name(s)" bold={false} h={9} />
      <Row $h={7}><Pad $l={3} /><Cell $w={6} $bold>2.</Cell><Cell $w={31} $bold>Your sex</Cell><Tick label="Male" /><Tick label="Female" /></Row>
      <Row $h={9}><Pad $l={3} /><Cell $w={6} $bold>3.</Cell><Cell $w={32} $bold>Your date of birth</Cell><Comb /></Row>
      <Entry n="4." label="Your place of birth" lead="Town/City" h={9} />
      <Entry label="" lead="Country" h={10} />
      <Row $h={9}><Pad $l={3} /><Cell $w={6} $bold>5.</Cell><Cell $w={32} $bold>Your country<br />of citizenship</Cell><Box aria-label="Country of citizenship" /></Row>
      <Entry n="6." label="Your native language" h={9} />
      <Row $h={10}><Pad $l={3} /><Cell $w={6} $bold>7.</Cell><Cell $w={32} $bold>Your height</Cell><Box $w={31} aria-label="Height in centimetres" /><Cell $w={5}>OR</Cell><Box aria-label="Height in feet" /></Row>
      <Entry n="8." label="Colour of your eyes" h={10} />
      <Row $h={7}><Pad $l={3} /><Cell $w={6} $bold>9.</Cell><Cell $w={60} $bold>Your current marital status</Cell></Row>
      <Row $h={8}><Pad $l={9} /><Tick label="Never" w={26} /><Tick label="Married" w={25} /><Tick label="Widowed" w={26} /><Tick label="Legally" /></Row>
      <Row $h={8}><Pad $l={9} /><Tick label="Annulled" w={26} /><Tick label="Divorced" w={25} /><Tick label="Common-law" w={26} /></Row>
      <Row $h={18}><Pad $l={9} /><Cell $w={63}>If you are married or in a common-law<br />relationship, provide the date on which<br />you were married or entered into the<br />common-law relationship</Cell><Comb /></Row>
      <Row $h={7}><Pad $l={3} /><Cell $w={6} $bold>10.</Cell><Cell $w={90} $bold>Have you previously been married or in a common-law relationship?</Cell></Row>
      <Row $h={14} $top><Pad $l={9} /><Tick label="No" w={16} /><Tick label="Yes" w={16} /><Cell $w={5}>►</Cell><Cell $w={80}>Give the following details for each previous<br />spouse or partner. If you do not have enough<br />space, provide details on a separate sheet</Cell></Row>
      <Row $h={10}><Pad $l={9} /><Cell $w={32}>Name of previous<br />spouse or partner</Cell><Box aria-label="Name of previous spouse" /></Row>
      <Row $h={9}><Pad $l={9} /><Cell $w={32}>Date of birth</Cell><Comb /></Row>
      <Row $h={9}><Pad $l={9} /><Cell $w={32}>Type of relationship</Cell><Tick label="Marriage" w={25} /><Tick label="Common-law union" /></Row>
      <Row $h={10}><Pad $l={9} /><Cell $w={10}>From</Cell><Comb /><Pad $l={11} /><Cell $w={4}>to</Cell><Comb /></Row>
      <Row $h={6}><Pad $l={3} /><Cell $w={6} $bold>11.</Cell><Cell $w={60} $bold>Your knowledge of English and French</Cell></Row>
      <Row $h={6}><Pad $l={9} /><Cell $w={57}>Can you communicate in English?</Cell><Tick label="Yes" w={15} /><Tick label="No" /></Row>
      <Row $h={6}><Pad $l={9} /><Cell $w={57}>Can you communicate in French?</Cell><Tick label="Yes" w={15} /><Tick label="No" /></Row>
    </Shade>
    <Foot><Cell $w={43}>IMM 0008 (05-2002) E<br />GENERIC</Cell><strong>This form is made available by Citizenship and Immigration Canada<br />(DISPONIBLE EN FRANÇAIS - IMM 0008 F)</strong></Foot>
  </Paper>
);

const Member = () => (
  <Column>
    <Gap $h={3} />
    <Field $h={9}><Box $h={9} aria-label="Family name" /></Field>
    <Field $h={9}><Box $h={9} aria-label="Given names" /></Field>
    <Indent $h={7}><Tick label="Male" /><Tick label="Female" /></Indent>
    <Indent $h={8}><Comb /></Indent>
    <Gap $h={7} />
    <Field $h={8}><Box aria-label="Town of birth" /></Field>
    <Field $h={9}><Box aria-label="Country of birth" /></Field>
    <Field $h={9}><Box aria-label="Citizenship" /></Field>
    <Field $h={9}><Box aria-label="Native language" /></Field>
    <Field $h={9}><Box aria-label="Relationship" /></Field>
    <Field $h={9}><DropBox aria-label="Status"><option></option></DropBox></Field>
    <Field $h={9}><Box $h={9} aria-label="Status details" /></Field>
    <Indent $h={9}><Tick label="Yes" /><Tick label="No" /></Indent>
    <Gap $h={2} />
    <Field $h={8}><Box aria-label="Country" /></Field>
    <Field $h={8}><Box aria-label="Place" /></Field>
    <Indent $h={8}><Comb /></Indent>
    <Gap $h={1} />
    <Field $h={8}><Box aria-label="Passport" /></Field>
    <Field $h={9}><Box $h={9} aria-label="Passport number" /></Field>
    <Gap $h={8} />
    <Indent $h={6}><Tick label="Yes" /><Tick label="No" /></Indent>
    <Indent $h={7}><Tick label="Yes" /><Tick label="No" /></Indent>
    <Gap $h={3} />
    <Field $h={8} $w={26}><Box aria-label="Years of education" /></Field>
    <Field $h={9}><DropBox aria-label="Education"><option>PH.D</option></DropBox></Field>
    <Field $h={9}><Box aria-label="Occupation" /></Field>
    <Field $h={9}><Box $w={26} aria-label="Height cm" /><Cell $w={4}>OR</Cell><Box aria-label="Height ft" /></Field>
    <Field $h={9}><Box $h={9} aria-label="Eye colour" /></Field>
    <Gap $h={3} />
    <Photo>Space reserved<br />for family member's photo</Photo>
    <Gap $h={1} />
  </Column>
);

const PageTwo = () => (
  <Paper $second>
    <PageNo>PAGE 2 OF 2</PageNo>
    <Intro>
      <span>each of your family members, whether they will be accompanying you to Canada or not. <b>You</b></span>
      <span><b>partner, if applicable, and all of your dependent children, and those of your spouse or</b></span>
      <span><b>permanent residents or citizens of Canada.</b></span>
    </Intro>
    <Intro $last>
      <span>members, photocopy this page before you start completing it or print it from our Web site at</span>
      <span>copies to fill in details about all your family members.</span>
    </Intro>
    <MemberHead><i /><span>FAMILY MEMBER</span><span>FAMILY MEMBER</span><span>FAMILY MEMBER</span></MemberHead>
    <Shade><Members><i /><Member /><Member /><Member /></Members></Shade>
  </Paper>
);

/* ------------------------------------------------------------------- menu */

const Menu = styled.div`
  position: absolute; left: 466px; top: 80px; width: 245px; padding: 4px 4px 0; background: #f3f3f3; border-radius: 4px 4px 0 0; box-shadow: 0 0 1px #555, 2px 3px 5px #0008;
`;
const MenuItem = styled.button<{ $on?: boolean }>`
  display: grid; grid-template-columns: 16px 27px 1fr auto; align-items: center; width: 100%; height: 28px; padding-right: 10px; text-align: left; white-space: nowrap; border-radius: 2px;
  background: ${(p) => (p.$on ? "#f5dfa9" : "transparent")};
`;
const MenuIcon = styled.span`position: relative; width: 24px; ${Dot} { right: -1px; bottom: -2px; }`;
const MenuRule = styled.div`height: 1px; margin: 1px 0 2px; background: #c2c2c2;`;

type Pane = { name: string; key?: string; icon: React.ReactNode; on?: boolean; dot?: boolean };
const panes: Pane[] = [
  { name: "Bookmarks", key: "Ctrl+B", icon: <BookmarkIcon />, dot: true },
  { name: "Thumbnails", key: "Ctrl+T", icon: <ThumbsIcon /> },
  { name: "Comments", key: "Ctrl+M", icon: <CommentIcon /> },
  { name: "Attachments", key: "Ctrl+Shift+A", icon: <ClipIcon /> },
  { name: "Fields", key: "Ctrl+I", icon: <FieldsIcon />, on: true, dot: true },
  { name: "Signatures", icon: <SignIcon /> },
  { name: "Layers", key: "Ctrl+L", icon: <LayersIcon />, dot: true },
  { name: "Content", icon: <ContentIcon /> },
  { name: "Destinations", icon: <PinIcon /> },
  { name: "3D Model Tree", icon: <TreeIcon /> },
  { name: "Links", icon: <LinkIcon /> },
];
const tagPanes: Pane[] = [
  { name: "Tags", icon: <TagIcon /> },
  { name: "Order", icon: <OrderIcon /> },
];
const accessPanes: Pane[] = [
  ...tagPanes,
  { name: "Accessibility Checker", icon: <CheckerIcon /> },
  { name: "Accessibility Report", icon: <ReportIcon /> },
];
const palettePanes: Pane[] = [
  { name: "Pan and Zoom", icon: <PanIcon /> },
  { name: "Stamps Palette", icon: <StampIcon /> },
  { name: "Comment Styles Palette", icon: <StylesIcon /> },
];
const spellPanes: Pane[] = [{ name: "Spell Check", icon: <SpellIcon /> }];
const menuSections = [panes, accessPanes, palettePanes, spellPanes];

const tabs: { name: string; w: number; rule?: boolean; kind?: "file" | "active" | "format" }[] = [
  { name: "File", w: 55, kind: "file" },
  { name: "Home", w: 53 },
  { name: "View", w: 43, kind: "active" },
  { name: "Comment", w: 68, rule: true },
  { name: "Protect", w: 54, rule: true },
  { name: "Form", w: 45, rule: true },
  { name: "Organize", w: 63, rule: true },
  { name: "Convert", w: 58, rule: true },
  { name: "Share", w: 45, rule: true },
  { name: "Review", w: 52, rule: true },
  { name: "Accessibility", w: 79, rule: true },
  { name: "Bookmarks", w: 73, rule: true },
  { name: "Help", w: 41, rule: true },
];
const fields = ["ap_Country_citizenship", "ap_current_occupation", "ap_DOB_day", "ap_DOB_month", "ap_DOB_year", "ap_email", "ap_eye_color", "ap_fam_name", "ap_giv_name", "ap_height_cm", "ap_height_ft", "ap_height_in"];

const RailButtons = ({ items }: { items: Pane[] }) => (
  <>{items.map((p) => <IconButton key={p.name} $on={p.on} aria-label={p.name}>{p.icon}{p.dot && <Dot />}</IconButton>)}</>
);
const GripMark = () => <Grip><Dots $w={9} $h={15} /><DockMark /></Grip>;

export default function App() {
  return (
    <Shell>
      <Global />
      <TitleBar>
        <LogoSlot><LogoIcon /></LogoSlot><Rule $gap={0} />
        <IconButton $w={30} aria-label="Open"><FolderIcon /></IconButton>
        <IconButton $w={12} aria-label="Open options"><Chevron /></IconButton>
        <IconButton $w={26} aria-label="Save"><SaveIcon /></IconButton>
        <IconButton $w={30} aria-label="Print"><PrinterIcon /></IconButton>
        <IconButton $w={27} aria-label="Email"><MailIcon /></IconButton>
        <IconButton $w={12} aria-label="Email options"><Chevron /></IconButton>
        <IconButton aria-label="Scan"><ScanIcon /></IconButton>
        <IconButton $w={11} aria-label="Scan options"><Chevron /></IconButton>
        <Rule $gap={2} />
        <IconButton aria-label="Undo"><UndoIcon /></IconButton>
        <IconButton $w={12} aria-label="Undo options"><Chevron faded /></IconButton>
        <IconButton aria-label="Redo"><UndoIcon flip /></IconButton>
        <IconButton $w={12} aria-label="Redo options"><Chevron faded /></IconButton>
        <Rule $gap={1} />
        <IconButton aria-label="Back"><ArrowCircle /></IconButton>
        <IconButton aria-label="Forward"><ArrowCircle faded /></IconButton>
        <AppTitle>Sample Form - PDF-XChange E..</AppTitle>
        <Search>
          <input aria-label="Quick Launch" placeholder="Quick Launch (Ctrl+.)" />
          <Svg size={18}><circle cx="9.500" cy="9.500" r="7.500" stroke="#888" strokeWidth="2" /><path d="M15 15 22 22" stroke="#888" strokeWidth="3" /></Svg>
        </Search>
        <Rule />
        <IconButton aria-label="UI theme"><SkinIcon /></IconButton>
        <IconButton $w={10} aria-label="Theme options"><Chevron /></IconButton>
        <Rule $gap={2} />
        <IconButton aria-label="Full screen"><FullIcon /></IconButton>
        <Rule $gap={0} />
        <WindowButton aria-label="Minimize"><svg width="12" height="6" aria-hidden="true"><path d="M0 5.500H12" stroke="#111" /></svg></WindowButton>
        <WindowButton aria-label="Maximize"><svg width="12" height="12" fill="none" aria-hidden="true"><path d="M.5 .5H11.500V11.500H.5Z" stroke="#111" /></svg></WindowButton>
        <WindowButton aria-label="Close"><Cross size={12} weight={1.2} /></WindowButton>
      </TitleBar>

      <TabBar>
        {tabs.map((t) => <Tab key={t.name} $w={t.w} $rule={t.rule} $kind={t.kind}>{t.name}</Tab>)}
        <Pad $l={2} />
        <Tab $w={74} $kind="format">Format</Tab>
        <Pad $l={3} />
        <IconButton aria-label="Find"><FindDocIcon /></IconButton>
        <IconButton aria-label="Search"><FindFolderIcon /></IconButton>
        <Spacer />
        <IconButton $w={18} aria-label="Collapse ribbon"><svg width="10" height="6" fill="none" aria-hidden="true"><path d="M1 5 5 1 9 5" stroke="#444" strokeWidth="1.600" /></svg></IconButton>
      </TabBar>

      <Ribbon>
        <Group $w={45}>
          <GroupBody>
            <Stack $pad={1}>
              <IconButton $on aria-label="Hand tool"><HandIcon /></IconButton>
              <IconButton aria-label="Select tool"><SelectIcon /></IconButton>
              <Line><IconButton aria-label="Other tools"><ToolsIcon /></IconButton><IconButton $w={14} aria-label="More tools"><Chevron /></IconButton></Line>
            </Stack>
          </GroupBody>
          <GroupName>Tools</GroupName>
        </Group>
        <Group $w={59}>
          <BigButton $w={58} $framed>
            <BigArt $framed><FirstCircle /></BigArt>
            <Caption>Go</Caption><Caption>To <Chevron /></Caption>
          </BigButton>
        </Group>
        <Group $w={258}>
          <GroupBody>
            <BigButton $w={56}><BigArt><ActualIcon /></BigArt><Caption>Actual</Caption><Caption>Size</Caption></BigButton>
            <Stack>
              <IconButton aria-label="Fit page"><FitIcon kind="page" /></IconButton>
              <IconButton $on aria-label="Fit width"><FitIcon kind="width" /></IconButton>
              <IconButton aria-label="Fit visible"><FitIcon kind="visible" /></IconButton>
            </Stack>
            <Stack $w={87}>
              <Line><Combo $w={84}><select aria-label="Zoom level"><option>32.97%</option></select><Chevron /></Combo></Line>
              <TextButton><ZoomCircle plus />Zoom In</TextButton>
              <TextButton><ZoomCircle />Zoom Out</TextButton>
            </Stack>
            <Rule $gap={0} $h={84} />
            <BigButton $w={54}><BigArt><MagnifierBig /></BigArt><Caption>Zoom</Caption><Caption>In/Out</Caption></BigButton>
            <Stack>
              <IconButton aria-label="Dynamic zoom"><LensIcon kind="updown" /></IconButton>
              <IconButton aria-label="Loupe"><LensIcon kind="frame" /></IconButton>
              <IconButton aria-label="Pan and zoom window"><PanIcon /></IconButton>
            </Stack>
          </GroupBody>
          <GroupName>Zoom</GroupName>
        </Group>
        <Group $w={343}>
          <GroupBody>
            <BigButton $w={56}><BigArt><RotateIcon /></BigArt><Caption>Rotate</Caption><Caption>View <Chevron /></Caption></BigButton>
            <Rule $gap={0} $h={84} />
            <Stack $w={127}>
              <Hollow>
                <IconButton aria-label="Single page"><PageIcon /></IconButton>
                <IconButton aria-label="Continuous"><ContinuousIcon /></IconButton>
                <IconButton $on aria-label="Two pages"><FacingIcon /></IconButton>
                <IconButton aria-label="Two pages continuous"><TwoUpIcon /></IconButton>
              </Hollow>
              <Hollow>
                <IconButton aria-label="Split pages"><SplitIcon /></IconButton>
                <IconButton aria-label="Show cover"><SplitTwoIcon /></IconButton>
              </Hollow>
            </Stack>
            <Rule $gap={0} $h={84} />
            <IconButton $w={32} aria-label="Rulers"><RulerIcon /></IconButton>
            <IconButton aria-label="Guides"><GuidesIcon /></IconButton>
            <IconButton aria-label="Snap"><MagnetIcon /></IconButton>
            <IconButton $w={10} aria-label="Snap options"><Chevron /></IconButton>
            <Rule $gap={0} $h={84} />
            <BigButton $w={58}><BigArt><WindowBig /></BigArt></BigButton>
          </GroupBody>
        </Group>
        <Group $w={53}>
          <GroupBody>
            <Stack $pad={6}>
              <Line><IconButton aria-label="Windows"><WindowsIcon /></IconButton><IconButton $w={12} aria-label="Window options"><Chevron /></IconButton></Line>
              <Line><IconButton $on aria-label="Panes"><PanesIcon /></IconButton><IconButton $on $w={12} aria-label="Pane options"><Chevron /></IconButton></Line>
              <Line><IconButton aria-label="Portfolio"><CaseIcon /></IconButton><IconButton $w={12} aria-label="Portfolio options"><Chevron faded /></IconButton></Line>
            </Stack>
          </GroupBody>
          <GroupName>Window</GroupName>
        </Group>
      </Ribbon>

      <DocTabs>
        <DocTab>Sample Form<Cross /></DocTab>
        <SquareButton $w={27} aria-label="New tab"><svg width="15" height="15" aria-hidden="true"><path d="M7.500 0V15M0 7.500H15" stroke="#222" /></svg></SquareButton>
        <Spacer />
        <SquareButton $w={29} aria-label="Close document"><Cross size={13} weight={1.3} /></SquareButton>
      </DocTabs>

      <Main>
        <Rail>
          <RailTop><DockMark /></RailTop>
          <Gap $h={1} /><Dots $w={26} $h={9} /><Gap $h={2} />
          <RailButtons items={panes} />
          <RailRule />
          <RailButtons items={tagPanes} />
          <Gap $h={3} /><DoubleChevron />
        </Rail>
        <Panel>
          <PanelHead><h2>Fields</h2><button aria-label="Close panel"><Cross /></button></PanelHead>
          <PanelBar>
            <GripMark />
            <Pad $l={3} />
            <TextButton><CogsIcon />Options... <Chevron /></TextButton>
            <Rule />
            <TextButton><CollapseIcon />Collapse All</TextButton>
            <Rule $gap={3} />
            <IconButton $w={24} aria-label="Rename"><RenameIcon /></IconButton>
            <Rule $gap={3} />
            <IconButton $w={28} aria-label="Form options"><ListCogIcon /></IconButton>
            <Spacer />
            <BarEnd><svg width="8" height="8" fill="none" aria-hidden="true"><path d="M0 1H8M1 7 4 3.500 7 7" stroke="#444" strokeWidth="1.500" /></svg></BarEnd>
          </PanelBar>
          <PanelBody>
            <FieldList>{fields.map((f) => <FieldRow key={f}><FieldGlyph />{f}</FieldRow>)}</FieldList>
            <ScrollTrack>
              <svg width="8" height="6" fill="none" aria-hidden="true"><path d="M1 5 4 2 7 5" stroke="#555" strokeWidth="1.800" /></svg>
              <ScrollThumb />
              <Chevron />
            </ScrollTrack>
            <Ghost><FieldsIcon size={48} /></Ghost>
          </PanelBody>
        </Panel>
        <Splitter><SplitHandle aria-label="Collapse panel"><svg width="6" height="8" fill="none" aria-hidden="true"><path d="M5 1 1.500 4 5 7" stroke="#222" strokeWidth="1.500" /></svg></SplitHandle></Splitter>
        <Viewer>
          <Canvas><PageOne /><PageTwo /></Canvas>
          <StatusBar>
            <GripMark />
            <IconButton $w={34} aria-label="More"><DoubleChevron /></IconButton>
            <GripMark />
            <IconButton $w={29} aria-label="First page"><FirstCircle faded /></IconButton>
            <IconButton aria-label="Previous page"><FirstCircle only faded /></IconButton>
            <PageInput aria-label="Page number" />
            <Spacer />
            <Dots $w={6} $h={22} />
            <Combo $w={82}><select aria-label="Page zoom"><option>32.97%</option></select><Chevron /></Combo>
            <Rule $gap={2} />
            <IconButton aria-label="Zoom out"><ZoomCircle /></IconButton>
            <IconButton $w={14} aria-label="More zoom"><DoubleChevron /></IconButton>
            <GripMark />
            <Pad $l={11} />
            <IconButton $w={12} aria-label="More options"><DoubleChevron /></IconButton>
            <BarEnd><svg width="8" height="30" fill="none" aria-hidden="true"><path d="M1 2 4 5 7 2M0 8H8" stroke="#444" strokeWidth="1.500" /></svg></BarEnd>
          </StatusBar>
        </Viewer>
      </Main>

      <Menu role="menu">
        {menuSections.map((section, i) => (
          <React.Fragment key={i}>
            {i > 0 && <MenuRule />}
            {section.map((m) => (
              <MenuItem key={m.name} role="menuitem" $on={m.on}>
                <span>{m.on && <Svg size={16}><path d="M6 13 10.500 17 18 8" stroke="#111" strokeWidth="3" /></Svg>}</span>
                <MenuIcon>{m.icon}{m.dot && <Dot />}</MenuIcon>
                <span>{m.name}</span>
                <span>{m.key}</span>
              </MenuItem>
            ))}
          </React.Fragment>
        ))}
      </Menu>
    </Shell>
  );
}
